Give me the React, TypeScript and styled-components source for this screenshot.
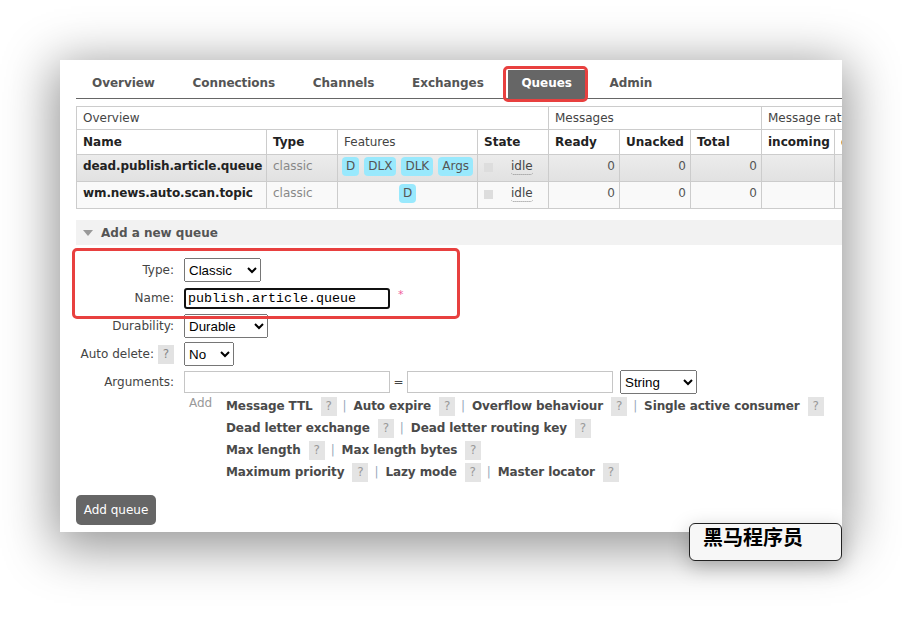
import React from 'react';
import styled, { createGlobalStyle } from 'styled-components';

const queues = [
    { name: 'dead.publish.article.queue', type: 'classic', features: ['D', 'DLX', 'DLK', 'Args'], shaded: true },
    { name: 'wm.news.auto.scan.topic', type: 'classic', features: ['D'], shaded: false },
];

const tabs = ['Overview', 'Connections', 'Channels', 'Exchanges', 'Queues', 'Admin'];

const argLines = [
    ['Message TTL', 'Auto expire', 'Overflow behaviour', 'Single active consumer'],
    ['Dead letter exchange', 'Dead letter routing key'],
    ['Max length', 'Max length bytes'],
    ['Maximum priority', 'Lazy mode', 'Master locator'],
];

const colWidths = [190, 71, 140, 71, 71, 71, 71, 73, 90, 90];

export default function App() {
    return (
        <Page>
            <GlobalStyle />
            <Card>
                <TabBar>
                    {tabs.map(t => (
                        <Tab key={t} $active={t === 'Queues'}>{t}</Tab>
                    ))}
                </TabBar>

                <QueueTable>
                    <colgroup>
                        {colWidths.map((w, i) => <col key={i} style={{ width: w }} />)}
                    </colgroup>
                    <thead>
                        <tr>
                            <GroupTh colSpan={4}>Overview</GroupTh>
                            <GroupTh colSpan={3}>Messages</GroupTh>
                            <GroupTh colSpan={3}>Message rates</GroupTh>
                        </tr>
                        <tr>
                            <Th>Name</Th>
                            <Th>Type</Th>
                            <Th $normal>Features</Th>
                            <Th>State</Th>
                            <Th>Ready</Th>
                            <Th>Unacked</Th>
                            <Th>Total</Th>
                            <Th>incoming</Th>
                            <Th>deliver / get</Th>
                            <Th>ack</Th>
                        </tr>
                    </thead>
                    <tbody>
                        {queues.map(q => (
                            <Row key={q.name} $shaded={q.shaded}>
                                <NameCell>{q.name}</NameCell>
                                <TypeCell>{q.type}</TypeCell>
                                <Td>
                                    <Badges>
                                        {q.features.map(f => <Badge key={f}>{f}</Badge>)}
                                    </Badges>
                                </Td>
                                <Td>
                                    <StateBox>
                                        <StateDot />
                                        <Idle>idle</Idle>
                                    </StateBox>
                                </Td>
                                <NumCell>0</NumCell>
                                <NumCell>0</NumCell>
                                <NumCell>0</NumCell>
                                <Td />
                                <Td />
                                <Td />
                            </Row>
                        ))}
                    </tbody>
                </QueueTable>

                <SectionHeader>
                    <Arrow />
                    Add a new queue
                </SectionHeader>

                <Form>
                    <Highlight>
                        <FormRow>
                            <Label>Type:</Label>
                            <Select $w={77} defaultValue="Classic">
                                <option>Classic</option>
                                <option>Quorum</option>
                            </Select>
                        </FormRow>
                        <FormRow>
                            <Label>Name:</Label>
                            <NameInput defaultValue="publish.article.queue" />
                            <Required>*</Required>
                        </FormRow>
                    </Highlight>
                    <FormRow>
                        <Label>Durability:</Label>
                        <Select $w={84} defaultValue="Durable">
                            <option>Durable</option>
                            <option>Transient</option>
                        </Select>
                    </FormRow>
                    <FormRow>
                        <Label>
                            Auto delete:
                            <Help>?</Help>
                        </Label>
                        <Select $w={50} defaultValue="No">
                            <option>No</option>
                            <option>Yes</option>
                        </Select>
                    </FormRow>
                    <FormRow>
                        <Label>Arguments:</Label>
                        <TextInput />
                        <Equals>=</Equals>
                        <TextInput />
                        <Select $w={77} $gap={7} defaultValue="String">
                            <option>String</option>
                            <option>Number</option>
                            <option>Boolean</option>
                            <option>List</option>
                        </Select>
                    </FormRow>
                    <ArgHints>
                        <AddText>Add</AddText>
                        <HintLines>
                            {argLines.map((line, i) => (
                                <HintLine key={i}>
                                    {line.map((h, j) => (
                                        <React.Fragment key={h}>
                                            {j > 0 && <Sep>|</Sep>}
                                            <HintLink>{h}</HintLink>
                                            <HintHelp>?</HintHelp>
                                        </React.Fragment>
                                    ))}
                                </HintLine>
                            ))}
                        </HintLines>
                    </ArgHints>
                    <AddButton>Add queue</AddButton>
                </Form>
            </Card>
            <Watermark>黑马程序员</Watermark>
        </Page>
    );
}

// スタイル
const GlobalStyle = createGlobalStyle`
  html, body {
    margin: 0;
    padding: 0;
    background: #fff;
  }
  body {
    font-family: "DejaVu Sans", Verdana, sans-serif;
    font-size: 12px;
    color: #484848;
  }
`;

const Page = styled.div`
  position: relative;
  width: 902px;
  height: 622px;
  padding: 60px 0 0 60px;
  box-sizing: border-box;
  overflow: hidden;
`;

const Card = styled.div`
  width: 782px;
  height: 472px;
  box-sizing: border-box;
  padding-left: 16px;
  background: #fff;
  box-shadow: 0 10px 48px 6px rgba(0, 0, 0, 0.42);
  overflow: hidden;
`;

const TabBar = styled.ul`
  display: flex;
  gap: 11.7px;
  margin: 0;
  padding: 10px 0 0 3px;
  list-style: none;
  border-bottom: 1px solid #666;
`;

const Tab = styled.li<{ $active?: boolean }>`
  position: relative;
  padding: 0 13px;
  height: 28px;
  line-height: 26px;
  font-weight: bold;
  letter-spacing: -0.05px;
  color: ${p => (p.$active ? '#fff' : '#555')};
  background: ${p => (p.$active ? '#666' : 'transparent')};

  ${p => p.$active && `
    &::after {
      content: '';
      position: absolute;
      top: -4px;
      left: -5px;
      right: -3px;
      bottom: -4px;
      border: 3px solid #e8403f;
      border-radius: 5px;
    }
  `}
`;

const QueueTable = styled.table`
  margin-top: 7px;
  border-collapse: collapse;
  table-layout: fixed;
  width: 877px;
  color: #444;
`;

const GroupTh = styled.th`
  border: 1px solid #ccc;
  padding: 3px 6px;
  height: 16px;
  text-align: left;
  font-weight: normal;
  white-space: nowrap;
  overflow: hidden;
`;

const Th = styled.th<{ $normal?: boolean }>`
  border: 1px solid #ccc;
  padding: 4px 6px;
  height: 16px;
  text-align: left;
  font-weight: ${p => (p.$normal ? 'normal' : 'bold')};
  color: ${p => (p.$normal ? '#444' : '#222')};
  white-space: nowrap;
  overflow: hidden;
`;

const Row = styled.tr<{ $shaded?: boolean }>`
  background: ${p => (p.$shaded ? 'linear-gradient(#ececec, #e1e1e1)' : '#f9f9f9')};
`;

const Td = styled.td`
  border: 1px solid #ccc;
  padding: 2px 6px 4px;
  height: 19px;
  vertical-align: top;
  line-height: 17px;
`;

const NameCell = styled(Td)`
  font-weight: bold;
  color: #222;
  padding-top: 3px;
  letter-spacing: -0.1px;
  white-space: nowrap;
`;

const TypeCell = styled(Td)`
  color: #888;
  padding-top: 3px;
`;

const NumCell = styled(Td)`
  text-align: right;
  padding-right: 4px;
  padding-top: 3px;
  color: #555;
`;

const Badges = styled.div`
  display: flex;
  justify-content: center;
  gap: 5px;
`;

const Badge = styled.span`
  display: inline-block;
  padding: 1px 4px;
  line-height: 17px;
  border-radius: 4px;
  background: #99e9fd;
  color: #555;
`;

const StateBox = styled.div`
  display: flex;
  align-items: center;
  gap: 18px;
  padding-top: 2px;
`;

const StateDot = styled.span`
  width: 9px;
  height: 9px;
  background: #ddd;
`;

const Idle = styled.span`
  line-height: 15px;
  border-bottom: 1px dotted #888;
  border-radius: 0 0 3px 3px;
  color: #444;
`;

const SectionHeader = styled.div`
  display: flex;
  align-items: center;
  gap: 8px;
  margin-top: 11px;
  height: 25px;
  padding-left: 7px;
  background: #f2f2f2;
  font-weight: bold;
  color: #555;
`;

const Arrow = styled.span`
  width: 0;
  height: 0;
  border-left: 5px solid transparent;
  border-right: 5px solid transparent;
  border-top: 6px solid #999;
`;

const Form = styled.div`
  margin-top: 11px;
`;

const Highlight = styled.div`
  position: relative;

  &::after {
    content: '';
    position: absolute;
    top: -8px;
    bottom: -7px;
    left: -4px;
    width: 388px;
    box-sizing: border-box;
    border: 3px solid #e8403f;
    border-radius: 5px;
    pointer-events: none;
  }
`;

const FormRow = styled.div`
  display: flex;
  align-items: center;
  height: 28px;
`;

const Label = styled.div`
  display: flex;
  align-items: center;
  justify-content: flex-end;
  gap: 4px;
  width: 98px;
  margin-right: 10px;
  color: #444;
`;

const Help = styled.span`
  display: inline-block;
  width: 16px;
  height: 19px;
  line-height: 19px;
  text-align: center;
  background: #e2e2e2;
  color: #888;
`;

const Select = styled.select<{ $w: number; $gap?: number }>`
  width: ${p => p.$w}px;
  height: 24px;
  margin-left: ${p => p.$gap ?? 0}px;
  font-family: "Liberation Sans", Arial, sans-serif;
  font-size: 13.33px;
  color: #000;
`;

const NameInput = styled.input`
  width: 206px;
  height: 21px;
  box-sizing: border-box;
  padding: 0 2px;
  border: 2px solid #111;
  border-radius: 3px;
  font-family: "Liberation Mono", "Courier New", monospace;
  font-size: 13.33px;
  color: #000;
  outline: none;
`;

const Required = styled.span`
  margin-left: 8px;
  margin-top: -8px;
  font-size: 11px;
  color: #f0609a;
`;

const TextInput = styled.input`
  width: 206px;
  height: 22px;
  box-sizing: border-box;
  border: 1px solid #c6c6c6;
  font-family: "Liberation Sans", Arial, sans-serif;
  font-size: 13.33px;
`;

const Equals = styled.span`
  width: 17px;
  text-align: center;
  color: #444;
`;

const ArgHints = styled.div`
  display: flex;
  margin-left: 108px;
  margin-top: -1px;
`;

const AddText = styled.span`
  width: 37px;
  padding-left: 5px;
  line-height: 17px;
  color: #999;
`;

const HintLines = styled.div`
  display: flex;
  flex-direction: column;
`;

const HintLine = styled.div`
  display: flex;
  align-items: center;
  height: 22px;
  white-space: nowrap;
  letter-spacing: -0.1px;
`;

const HintLink = styled.span`
  font-weight: bold;
  color: #4a4a4a;
`;

const HintHelp = styled(Help)`
  margin: 0 6px 0 8px;
  background: #e4e4e4;
  color: #999;
`;

const Sep = styled.span`
  margin-right: 7px;
  color: #99aabb;
`;

const AddButton = styled.button`
  display: block;
  margin-top: 12px;
  width: 80px;
  height: 30px;
  border: none;
  border-radius: 5px;
  background: #666;
  color: #fff;
  font-family: "DejaVu Sans", Verdana, sans-serif;
  font-size: 12px;
  padding: 0;
`;

const Watermark = styled.div`
  position: absolute;
  left: 689px;
  top: 523px;
  width: 153px;
  height: 38px;
  box-sizing: border-box;
  padding-left: 13px;
  border: 1px solid #222;
  border-radius: 6px;
  background: #f7f7f7;
  box-shadow: 0 6px 20px rgba(0, 0, 0, 0.25);
  font-family: "Noto Sans CJK SC", sans-serif;
  font-size: 20px;
  font-weight: bold;
  line-height: 26px;
  color: #000;
`;
